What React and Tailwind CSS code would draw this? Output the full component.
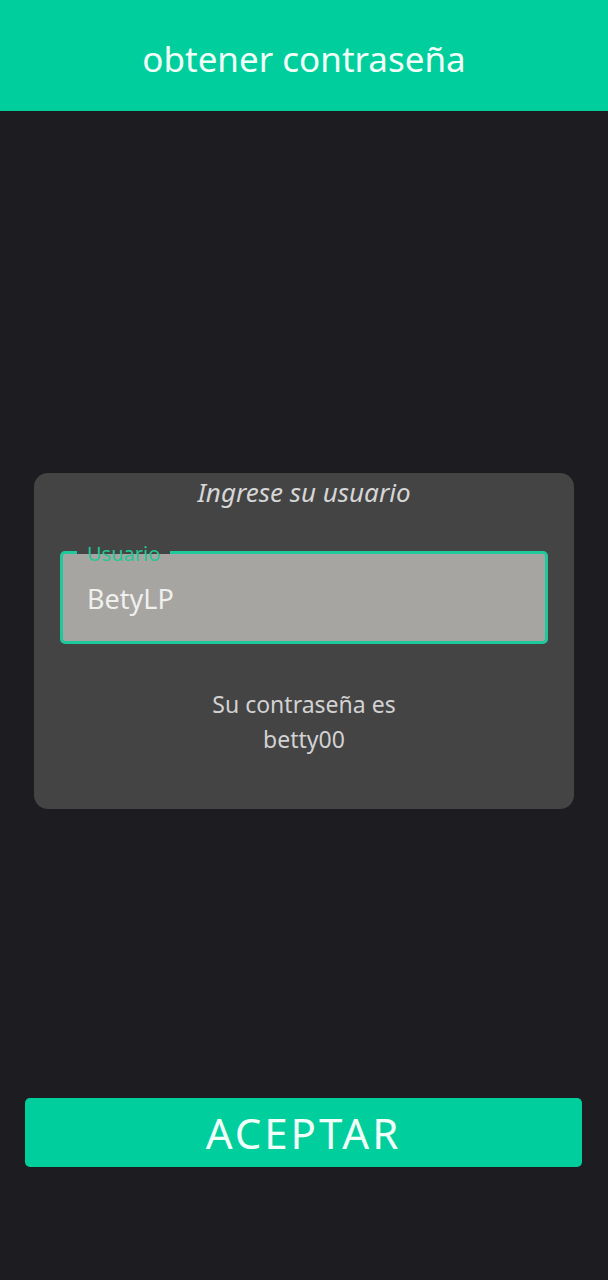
export default function App() {
  return (
    <div
      className="flex min-h-[1280px] w-full flex-col bg-[#1d1c21]"
      style={{ fontFamily: '"Noto Sans", "Open Sans", sans-serif' }}
    >
      <header className="flex h-[111px] items-center justify-center bg-[#00cf9d] pt-[6px]">
        <h1 className="text-[35px] leading-none text-[#f2fff9]">obtener contraseña</h1>
      </header>

      <div className="mx-[34px] mt-[362px] flex h-[336px] flex-col rounded-[14px] bg-[#444444] px-[26px] pt-[2px]">
        <p className="text-center text-[26px] italic leading-[34px] text-[#d6d6d6]">Ingrese su usuario</p>

        <div className="relative mt-[42px] flex h-[93px] items-center rounded-[5px] border-[3px] border-[#1ec99b] bg-[#a7a5a1] px-6">
          <span className="absolute -top-[3px] left-[14px] h-[3px] w-[93px] bg-[#444444]" />
          <span className="absolute -top-[12px] left-[24px] text-[20px] leading-[24px] text-[#22c796]">Usuario</span>
          <span className="pt-[2px] text-[27px] leading-none text-[#f0f0ee]">BetyLP</span>
        </div>

        <div className="mt-[43px] text-center text-[23px] leading-[35px] text-[#d2d2d2]">
          <p>Su contraseña es</p>
          <p>betty00</p>
        </div>
      </div>

      <button className="ml-[25px] mr-[26px] mt-[289px] flex h-[69px] items-center justify-center rounded-[5px] bg-[#00cf9d] text-[42px] leading-none tracking-[3px] text-[#f2fff9]">
        ACEPTAR
      </button>
    </div>
  );
}
